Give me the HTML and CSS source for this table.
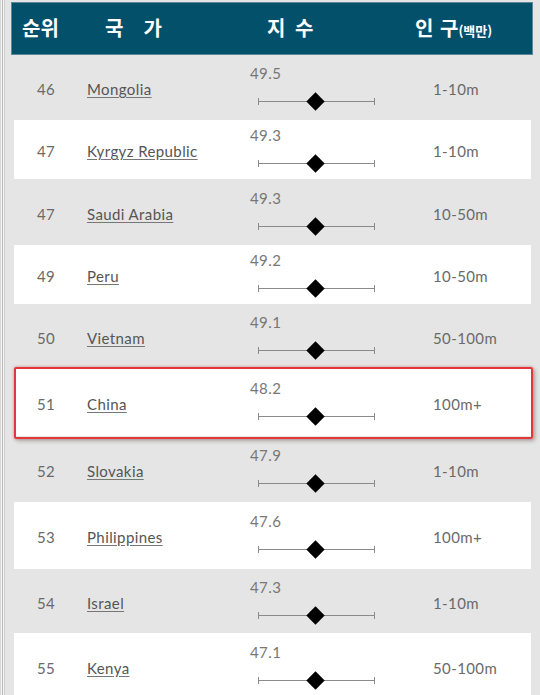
FILE: index.html
```html
<!DOCTYPE html>
<html lang="ko">
<head>
<meta charset="utf-8">
<link rel="stylesheet" href="styles.css">
</head>
<body>
<div class="frame">
  <div class="edge"></div>
  <div class="main">
    <div class="header">
      <span class="h-rank">순위</span>
      <span class="h-country">국　가</span>
      <span class="h-score">지 수</span>
      <span class="h-pop">인 구<small>(백만)</small></span>
    </div>
    <div class="rows">
      <div class="row gray">
        <span class="rank">46</span><a class="country">Mongolia</a>
        <div class="score"><span class="val">49.5</span><div class="slider"><i class="dia"></i></div></div>
        <span class="pop">1-10m</span>
      </div>
      <div class="row white">
        <span class="rank">47</span><a class="country">Kyrgyz Republic</a>
        <div class="score"><span class="val">49.3</span><div class="slider"><i class="dia"></i></div></div>
        <span class="pop">1-10m</span>
      </div>
      <div class="row gray">
        <span class="rank">47</span><a class="country">Saudi Arabia</a>
        <div class="score"><span class="val">49.3</span><div class="slider"><i class="dia"></i></div></div>
        <span class="pop">10-50m</span>
      </div>
      <div class="row white">
        <span class="rank">49</span><a class="country">Peru</a>
        <div class="score"><span class="val">49.2</span><div class="slider"><i class="dia"></i></div></div>
        <span class="pop">10-50m</span>
      </div>
      <div class="row gray">
        <span class="rank">50</span><a class="country">Vietnam</a>
        <div class="score"><span class="val">49.1</span><div class="slider"><i class="dia"></i></div></div>
        <span class="pop">50-100m</span>
      </div>
      <div class="row white highlight">
        <span class="rank">51</span><a class="country">China</a>
        <div class="score"><span class="val">48.2</span><div class="slider"><i class="dia"></i></div></div>
        <span class="pop">100m+</span>
      </div>
      <div class="row gray">
        <span class="rank">52</span><a class="country">Slovakia</a>
        <div class="score"><span class="val">47.9</span><div class="slider"><i class="dia"></i></div></div>
        <span class="pop">1-10m</span>
      </div>
      <div class="row white">
        <span class="rank">53</span><a class="country">Philippines</a>
        <div class="score"><span class="val">47.6</span><div class="slider"><i class="dia"></i></div></div>
        <span class="pop">100m+</span>
      </div>
      <div class="row gray">
        <span class="rank">54</span><a class="country">Israel</a>
        <div class="score"><span class="val">47.3</span><div class="slider"><i class="dia"></i></div></div>
        <span class="pop">1-10m</span>
      </div>
      <div class="row white">
        <span class="rank">55</span><a class="country">Kenya</a>
        <div class="score"><span class="val">47.1</span><div class="slider"><i class="dia"></i></div></div>
        <span class="pop">50-100m</span>
      </div>
    </div>
  </div>
</div>
</body>
</html>
```

FILE: styles.css
```css
html, body {
  margin: 0;
  padding: 0;
  background: #e5e5e5;
  overflow: hidden;
}
body {
  width: 540px;
  height: 695px;
  font-family: Lato, "Open Sans", sans-serif;
}
.frame {
  display: flex;
  height: 695px;
}
.edge {
  width: 5px;
  flex: none;
  background: linear-gradient(to right, #d6d6d6 0, #d6d6d6 1px, #f6f6f6 1px, #f6f6f6 2px, #b9b9b9 2px, #b9b9b9 3px, #f3f3f3 3px, #f3f3f3 4px, #cfcfcf 4px, #cfcfcf 5px);
}
.main {
  flex: 1;
  padding-left: 6px;
}
.header {
  margin-top: 2px;
  width: 522px;
  height: 53px;
  box-sizing: border-box;
  background: #03506b;
  border: 1px solid #5d8799;
  color: #fff;
  font-family: "Noto Sans CJK KR", sans-serif;
  font-weight: 700;
  font-size: 20px;
  position: relative;
}
.header span {
  position: absolute;
  top: 11px;
  line-height: 28px;
  white-space: pre;
}
.h-rank { left: 10px; }
.h-country { left: 93px; }
.h-score { left: 255px; word-spacing: 4px; }
.h-pop { left: 403px; word-spacing: 1px; }
.h-pop small {
  font-size: 13px;
}
.rows {
  margin-left: 3px;
  width: 517px;
}
.row {
  display: grid;
  grid-template-columns: 23px 50px 163px 183px 1fr;
  align-items: center;
  font-size: 15px;
  letter-spacing: 0.4px;
  color: #6a6a6a;
  position: relative;
}
.row.white { background: #fff; }
.row.gray { background: #e5e5e5; }
.row:nth-child(1) { height: 65px; }
.row:nth-child(2) { height: 59px; }
.row:nth-child(3) { height: 66px; }
.row:nth-child(4) { height: 59px; }
.row:nth-child(5) { height: 65px; }
.row:nth-child(6) { height: 67px; }
.row:nth-child(7) { height: 66px; }
.row:nth-child(8) { height: 67px; }
.row:nth-child(9) { height: 64px; }
.row:nth-child(10) { height: 66px; }
.rank {
  grid-column: 2;
  margin-top: 3px;
}
.country {
  grid-column: 3;
  color: #555;
  text-decoration: underline;
  text-underline-offset: 2px;
  text-decoration-color: #777;
  margin-top: 3px;
}
.score {
  grid-column: 4;
  display: flex;
  flex-direction: column;
  margin-top: 1px;
}
.val {
  line-height: 18px;
  color: #777;
}
.slider {
  margin-top: 10px;
  margin-left: 8px;
  width: 117px;
  height: 20px;
  position: relative;
}
.slider::before {
  content: "";
  position: absolute;
  left: 0;
  right: 0;
  top: 9px;
  height: 1px;
  background: #8a8a8a;
}
.slider::after {
  content: "";
  position: absolute;
  left: 0;
  right: 0;
  top: 6px;
  height: 7px;
  border-left: 1px solid #8a8a8a;
  border-right: 1px solid #8a8a8a;
}
.dia {
  position: absolute;
  left: 51px;
  top: 3px;
  width: 13px;
  height: 13px;
  background: #000;
  transform: rotate(45deg);
  z-index: 1;
}
.pop {
  grid-column: 5;
  margin-top: 3px;
}
.highlight {
  z-index: 2;
}
.highlight::after {
  content: "";
  position: absolute;
  left: 0;
  right: -2px;
  top: -2px;
  bottom: -3px;
  border: 2px solid #e0393b;
  border-radius: 2px;
  box-shadow: 0 0 3px rgba(224, 57, 59, 0.5), 2px 2px 4px rgba(0, 0, 0, 0.25);
  pointer-events: none;
}
```
